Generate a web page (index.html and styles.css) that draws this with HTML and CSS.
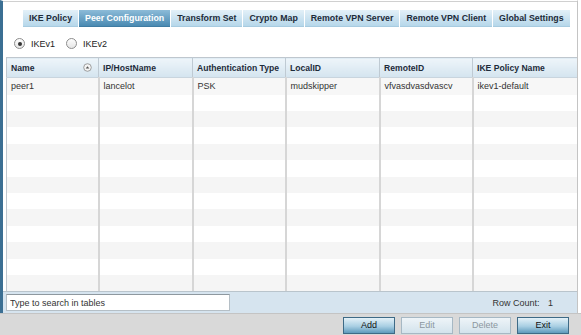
FILE: index.html
```html
<!DOCTYPE html>
<html lang="en">
<head>
  <meta charset="UTF-8" />
  <title>Peer Configuration</title>
  <link rel="stylesheet" href="styles.css">
</head>
<body>
  <div class="frame">
    <div class="tabs">
      <div class="tab">IKE Policy</div>
      <div class="tab active">Peer Configuration</div>
      <div class="tab">Transform Set</div>
      <div class="tab">Crypto Map</div>
      <div class="tab">Remote VPN Server</div>
      <div class="tab">Remote VPN Client</div>
      <div class="tab">Global Settings</div>
    </div>

    <div class="versions">
      <label class="radio"><span class="dot checked"></span>IKEv1</label>
      <label class="radio"><span class="dot"></span>IKEv2</label>
    </div>

    <div class="grid-wrap">
      <table class="grid">
        <colgroup>
          <col style="width:92px">
          <col style="width:94px">
          <col style="width:93px">
          <col style="width:94px">
          <col style="width:93px">
          <col>
        </colgroup>
        <thead>
          <tr>
            <th>
              <div class="th-sort">Name
                <svg width="9" height="9" viewBox="0 0 9 9">
                  <circle cx="4.5" cy="4.5" r="3.8" fill="#f4f4f4" stroke="#8a8a8a" stroke-width="0.8"/>
                  <path d="M2.7 5.6 L4.5 3.2 L6.3 5.6 Z" fill="#555"/>
                </svg>
              </div>
            </th>
            <th>IP/HostName</th>
            <th>Authentication Type</th>
            <th>LocalID</th>
            <th>RemoteID</th>
            <th>IKE Policy Name</th>
          </tr>
        </thead>
        <tbody>
          <tr><td>peer1</td><td>lancelot</td><td>PSK</td><td>mudskipper</td><td>vfvasdvasdvascv</td><td>ikev1-default</td></tr>
          <tr><td></td><td></td><td></td><td></td><td></td><td></td></tr>
          <tr><td></td><td></td><td></td><td></td><td></td><td></td></tr>
          <tr><td></td><td></td><td></td><td></td><td></td><td></td></tr>
          <tr><td></td><td></td><td></td><td></td><td></td><td></td></tr>
          <tr><td></td><td></td><td></td><td></td><td></td><td></td></tr>
          <tr><td></td><td></td><td></td><td></td><td></td><td></td></tr>
          <tr><td></td><td></td><td></td><td></td><td></td><td></td></tr>
          <tr><td></td><td></td><td></td><td></td><td></td><td></td></tr>
          <tr><td></td><td></td><td></td><td></td><td></td><td></td></tr>
          <tr><td></td><td></td><td></td><td></td><td></td><td></td></tr>
          <tr><td></td><td></td><td></td><td></td><td></td><td></td></tr>
          <tr><td></td><td></td><td></td><td></td><td></td><td></td></tr>
        </tbody>
      </table>
    </div>

    <div class="search-bar">
      <input class="search" type="text" value="Type to search in tables">
      <div class="row-count">Row Count: <span>1</span></div>
    </div>
  </div>

  <div class="actions">
    <button class="btn">Add</button>
    <button class="btn" disabled>Edit</button>
    <button class="btn" disabled>Delete</button>
    <button class="btn">Exit</button>
  </div>
</body>
</html>
```

FILE: styles.css
```css
body {
  margin: 0;
  width: 581px;
  height: 335px;
  overflow: hidden;
  background: #fff;
  font-family: 'Liberation Sans', Arial, sans-serif;
  font-size: 9px;
  color: #222;
}
.frame {
  height: 313px;
  box-sizing: border-box;
  width: 578px;
  border-left: 3px solid #3b6f93;
  border-right: 1px solid #c4c4c4;
  border-top: 1px solid #fff;
  box-shadow: inset 0 1px 0 #d0d0d0;
  display: flex;
  flex-direction: column;
  background: #fff;
}
.tabs {
  display: flex;
  gap: 1px;
  margin: 9px 0 0 20px;
  height: 17px;
}
.tab {
  padding: 0 6px;
  line-height: 17px;
  font-weight: bold;
  font-size: 8.8px;
  color: #1d2b3a;
  background: linear-gradient(#e3f0f8, #b6d7ea);
  border-bottom: 1px solid #a7cbe0;
  box-sizing: border-box;
  white-space: nowrap;
}
.tab.active {
  color: #fff;
  background: linear-gradient(#8cbbd8, #4a8ab2);
  border-bottom-color: #3f7ca3;
}
.versions {
  display: flex;
  align-items: center;
  gap: 11px;
  height: 32px;
  padding: 3px 0 0 11px;
  box-sizing: border-box;
}
.radio {
  display: flex;
  align-items: center;
  gap: 6px;
  color: #222;
}
.dot {
  width: 9px;
  height: 9px;
  border-radius: 50%;
  border: 1px solid #8d8d8d;
  background: linear-gradient(#fdfdfd, #e6e6e6);
  position: relative;
}
.dot.checked::after {
  content: '';
  position: absolute;
  left: 2.5px;
  top: 2.5px;
  width: 4px;
  height: 4px;
  border-radius: 50%;
  background: #333;
}
.grid-wrap {
  margin-left: 3px;
  flex: 1;
}
.grid {
  width: 100%;
  border-collapse: collapse;
  table-layout: fixed;
  border-left: 1px solid #bfc7ce;
  border-top: 1px solid #bfc7ce;
}
.grid th {
  height: 19px;
  padding: 0 4px;
  text-align: left;
  font-weight: bold;
  font-size: 8.6px;
  white-space: nowrap;
  overflow: hidden;
  color: #1d2b3a;
  background: linear-gradient(#eef5fa, #d4e4ef);
  border-right: 1px solid #bfcad3;
  border-bottom: 1px solid #c9d5de;
}
.th-sort {
  display: flex;
  justify-content: space-between;
  align-items: center;
  padding-right: 2px;
}
.th-sort svg {
  display: block;
}
.grid td {
  height: 16.4px;
  padding: 0 4px;
  color: #333;
  border-right: 2px solid #d6d6d6;
  white-space: nowrap;
  overflow: hidden;
}
.grid td:last-child,
.grid th:last-child {
  border-right: none;
}
.grid tbody tr:nth-child(odd) {
  background: #f5f5f5;
}
.grid tbody tr:first-child {
  background: #f7f7f7;
}
.search-bar {
  display: flex;
  align-items: center;
  justify-content: space-between;
  height: 22px;
  background: #d6e4ef;
  border-top: 1px solid #b9c4cc;
  padding: 0 24px 0 3px;
}
.search {
  width: 224px;
  height: 17px;
  box-sizing: border-box;
  border: 1px solid #b5bfc6;
  border-top-color: #8e989f;
  padding: 0 3px;
  font-family: inherit;
  font-size: 9px;
  color: #333;
  background: #fff;
  outline: none;
}
.row-count {
  color: #333;
}
.row-count span {
  margin-left: 6px;
}
.actions {
  height: 22px;
  background: #d9d9d9;
  border-top: 1px solid #c4c4c4;
  display: flex;
  justify-content: flex-end;
  align-items: center;
  gap: 6px;
  padding-right: 12px;
}
.btn {
  width: 52px;
  height: 17px;
  padding: 0;
  font-family: inherit;
  font-size: 9px;
  color: #111;
  border: 1px solid #3e6a86;
  background: linear-gradient(#e4f1f8, #a9cfe3 55%, #5e9abc);
}
.btn:disabled {
  color: #8b97a0;
  border-color: #a6b8c4;
  background: linear-gradient(#eef4f8, #d3e3ec);
}
```
